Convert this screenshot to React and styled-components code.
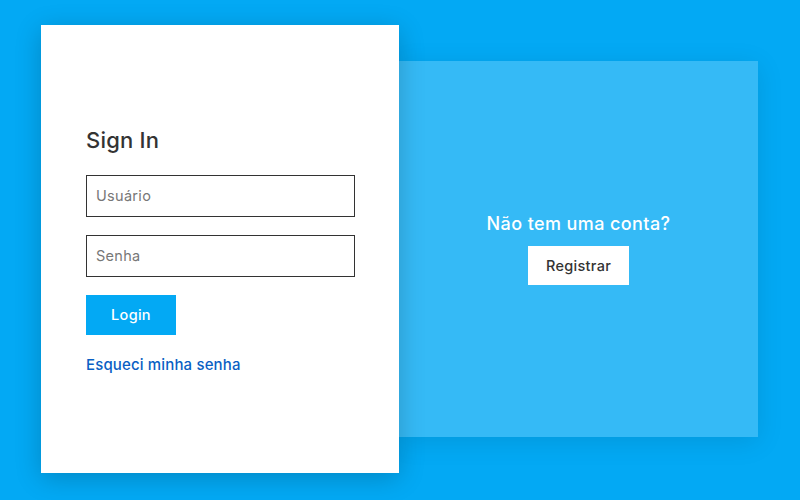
import React from 'react';
import styled, { createGlobalStyle } from 'styled-components';

const GlobalStyle = createGlobalStyle`
  * { box-sizing: border-box; }
  html, body {
    margin: 0;
    padding: 0;
    height: 100%;
    background: #03a9f4;
    font-family: Inter, "Open Sans", sans-serif;
  }
  #root { height: 100%; }
`;

const Page = styled.div`
  height: 498px;
  padding-left: 41px;
  display: flex;
  align-items: center;
`;

const Wrapper = styled.div`
  display: flex;
  align-items: center;
`;

const SignBox = styled.div`
  position: relative;
  z-index: 2;
  width: 358px;
  height: 448px;
  background: #fff;
  padding: 2px 44px 0 45px;
  display: flex;
  flex-direction: column;
  justify-content: center;
  box-shadow: 0 5px 25px rgba(0, 0, 0, 0.2);
`;

const Title = styled.h2`
  margin: 0 0 22px;
  font-size: 22px;
  font-weight: 500;
  letter-spacing: 0.2px;
  color: #333;
`;

const Input = styled.input`
  display: block;
  width: 100%;
  height: 42px;
  margin-bottom: 18px;
  padding: 0 9px;
  border: 1px solid #333;
  outline: none;
  font-family: inherit;
  font-size: 14.5px;
  letter-spacing: 0.3px;
  color: #333;
  &::placeholder { color: #777; }
`;

const Button = styled.button`
  width: ${p => p.$w}px;
  height: ${p => p.$h}px;
  border: none;
  cursor: pointer;
  font-family: inherit;
  font-size: 14.5px;
  font-weight: 500;
  letter-spacing: 0.3px;
  background: ${p => (p.$light ? '#fff' : '#03a9f4')};
  color: ${p => (p.$light ? '#333' : '#fff')};
`;

const Forgot = styled.a`
  display: block;
  margin-top: 20px;
  font-size: 15px;
  font-weight: 500;
  letter-spacing: 0.15px;
  color: #0a5fc4;
  text-decoration: none;
`;

const Side = styled.div`
  width: 359px;
  height: 376px;
  background: rgba(255, 255, 255, 0.2);
  display: flex;
  flex-direction: column;
  align-items: center;
  justify-content: center;
  gap: 12px;
  box-shadow: 0 5px 25px rgba(0, 0, 0, 0.1);
`;

const SideText = styled.p`
  margin: 0;
  font-size: 18px;
  font-weight: 500;
  letter-spacing: 0.4px;
  color: #fff;
`;

export default function App() {
  return (
    <Page>
      <GlobalStyle />
      <Wrapper>
        <SignBox>
          <Title>Sign In</Title>
          <Input type="text" placeholder="Usuário" />
          <Input type="password" placeholder="Senha" />
          <Button $w={90} $h={40}>Login</Button>
          <Forgot href="#">Esqueci minha senha</Forgot>
        </SignBox>
        <Side>
          <SideText>Não tem uma conta?</SideText>
          <Button $light $w={101} $h={39}>Registrar</Button>
        </Side>
      </Wrapper>
    </Page>
  );
}
